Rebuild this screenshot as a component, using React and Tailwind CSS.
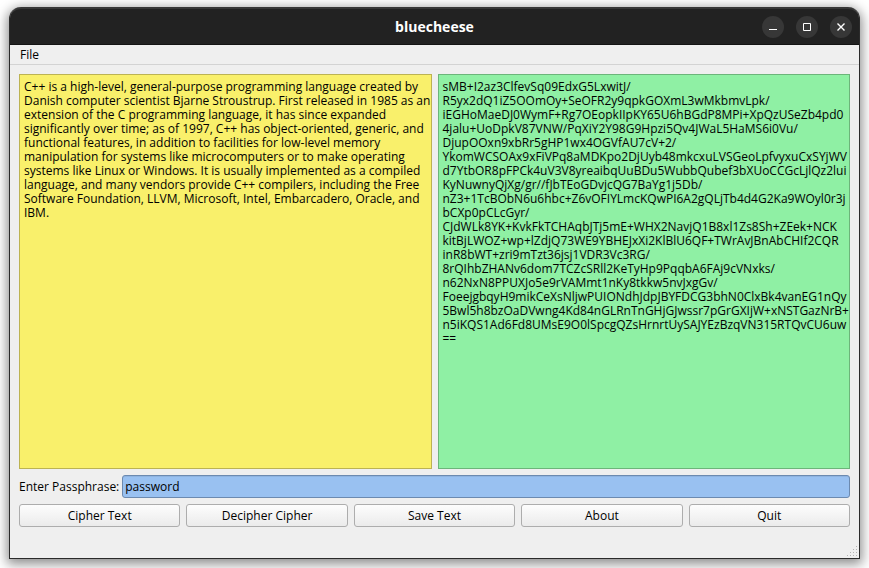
import React from "react";

const plainText = [
  "C++ is a high-level, general-purpose programming language created by",
  "Danish computer scientist Bjarne Stroustrup. First released in 1985 as an",
  "extension of the C programming language, it has since expanded",
  "significantly over time; as of 1997, C++ has object-oriented, generic, and",
  "functional features, in addition to facilities for low-level memory",
  "manipulation for systems like microcomputers or to make operating",
  "systems like Linux or Windows. It is usually implemented as a compiled",
  "language, and many vendors provide C++ compilers, including the Free",
  "Software Foundation, LLVM, Microsoft, Intel, Embarcadero, Oracle, and",
  "IBM.",
].join("\n");

const cipherText = [
  "sMB+I2az3ClfevSq09EdxG5LxwitJ/",
  "R5yx2dQ1iZ5OOmOy+SeOFR2y9qpkGOXmL3wMkbmvLpk/",
  "iEGHoMaeDJ0WymF+Rg7OEopkIIpKY65U6hBGdP8MPi+XpQzUSeZb4pd0",
  "4jalu+UoDpkV87VNW/PqXiY2Y98G9Hpzi5Qv4JWaL5HaMS6i0Vu/",
  "DjupOOxn9xbRr5gHP1wx4OGVfAU7cV+2/",
  "YkomWCSOAx9xFiVPq8aMDKpo2DjUyb48mkcxuLVSGeoLpfvyxuCxSYjWV",
  "d7YtbOR8pFPCk4uV3V8yreaibqUuBDu5WubbQubef3bXUoCCGcLjlQz2lui",
  "KyNuwnyQjXg/gr//fJbTEoGDvjcQG7BaYg1j5Db/",
  "nZ3+1TcBObN6u6hbc+Z6vOFIYLmcKQwPI6A2gQLjTb4d4G2Ka9WOyl0r3j",
  "bCXp0pCLcGyr/",
  "CJdWLk8YK+KvkFkTCHAqbJTj5mE+WHX2NavjQ1B8xl1Zs8Sh+ZEek+NCK",
  "kitBjLWOZ+wp+lZdjQ73WE9YBHEJxXi2KlBlU6QF+TWrAvJBnAbCHIf2CQR",
  "inR8bWT+zri9mTzt36jsj1VDR3Vc3RG/",
  "8rQIhbZHANv6dom7TCZcSRll2KeTyHp9PqqbA6FAj9cVNxks/",
  "n62NxN8PPUXJo5e9rVAMmt1nKy8tkkw5nvJxgGv/",
  "FoeejgbqyH9mikCeXsNljwPUIONdhJdpJBYFDCG3bhN0ClxBk4vanEG1nQy",
  "5Bwl5h8bzOaDVwng4Kd84nGLRnTnGHjGJwssr7pGrGXIjW+xNSTGazNrB+",
  "n5iKQS1Ad6Fd8UMsE9O0lSpcgQZsHrnrtUySAJYEzBzqVN315RTQvCU6uw",
  "==",
].join("\n");

const actions = ["Cipher Text", "Decipher Cipher", "Save Text", "About", "Quit"];

function WindowButton({ label, children }) {
  return (
    <button type="button" aria-label={label} className="flex size-[22px] items-center justify-center rounded-full bg-[#373737]">
      <svg width="10" height="10" viewBox="0 0 10 10" fill="none" stroke="#fff" aria-hidden="true">
        {children}
      </svg>
    </button>
  );
}

function TitleBar() {
  return (
    <header className="grid h-[38px] grid-cols-[1fr_auto_1fr] items-center rounded-t-[11px] border-t-2 border-b border-t-[#373737] border-b-[#141414] bg-[#222222] px-[7px]">
      <h1 className="col-start-2 text-[14px] font-bold leading-5 text-white">bluecheese</h1>
      <div className="flex justify-end gap-3">
        <WindowButton label="Minimize">
          <path d="M1 7.5h8" />
        </WindowButton>
        <WindowButton label="Maximize">
          <path d="M1.500 1.500h7v7h-7z" />
        </WindowButton>
        <WindowButton label="Close">
          <path d="M1.500 1.500l7 7M8.500 1.500l-7 7" strokeWidth="1.400" />
        </WindowButton>
      </div>
    </header>
  );
}

function TextPane({ label, value, className }) {
  return (
    <textarea
      aria-label={label}
      defaultValue={value}
      spellCheck={false}
      className={`block min-w-0 flex-1 resize-none overflow-hidden whitespace-pre border px-1 py-[5px] text-[12px] leading-[14px] outline-none ${className}`}
    />
  );
}

export default function App() {
  return (
    <div className="flex min-h-screen flex-col bg-white px-[9px] pt-[7px] pb-[9px] font-['Open_Sans','Noto_Sans',sans-serif] text-[12px] text-black">
      <div className="flex flex-1 flex-col rounded-t-xl border-x border-b border-[#2b2b2b] bg-[#efefef] shadow-[0_3px_12px_2px_rgba(0,0,0,0.45)]">
        <TitleBar />
        <nav className="flex h-5 items-center border-b border-[#d3d3d3] px-2.5">
          <button type="button" className="leading-4">File</button>
        </nav>
        <main className="flex flex-1 flex-col gap-1.5 px-[9px] pt-[9px]">
          <div className="flex flex-1 gap-1.5">
            <TextPane label="Plain text" value={plainText} className="border-[#bcb353] bg-[#f9f06b]" />
            <TextPane label="Cipher text" value={cipherText} className="border-[#6cb57a] bg-[#8ff0a4]" />
          </div>
          <div className="flex items-center gap-[3px]">
            <label htmlFor="passphrase" className="whitespace-nowrap leading-4">Enter Passphrase:</label>
            <input
              id="passphrase"
              type="text"
              defaultValue="password"
              className="h-[23px] min-w-0 flex-1 rounded-[3px] border border-[#6c8ab0] bg-[#99c1f1] px-0.5 leading-4 shadow-[inset_0_1px_0_#8fb4e1] outline-none"
            />
          </div>
          <div className="grid grid-cols-5 gap-1.5">
            {actions.map((name) => (
              <button
                key={name}
                type="button"
                className="h-[23px] rounded-[3px] border border-[#adadad] bg-linear-to-b from-[#fdfdfd] to-[#ebebeb] leading-4"
              >
                {name}
              </button>
            ))}
          </div>
        </main>
        <footer className="flex h-[31px] items-end justify-end pr-0.5 pb-0.5">
          <svg width="10" height="10" viewBox="0 0 10 10" fill="#b4b4b4" aria-hidden="true">
            <path d="M9 0h1v1H9zM9 3h1v1H9zM6 3h1v1H6zM9 6h1v1H9zM6 6h1v1H6zM3 6h1v1H3zM9 9h1v1H9zM6 9h1v1H6zM3 9h1v1H3zM0 9h1v1H0z" />
          </svg>
        </footer>
      </div>
    </div>
  );
}
